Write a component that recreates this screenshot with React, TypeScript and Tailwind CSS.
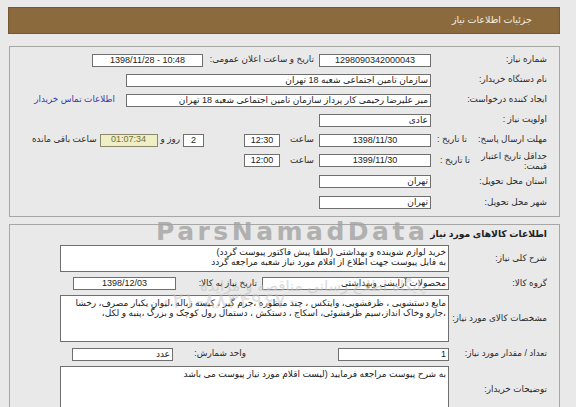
import React from "react";

const box = "bg-white border border-[#6f6f6f] h-[13px] flex items-center text-[9px] leading-none text-[#222] overflow-hidden whitespace-nowrap";
const lbl = "text-[8.8px] text-[#2b2b2b] whitespace-nowrap";

function Row({ label, children, h = "h-[20px]" }: { label: React.ReactNode; children?: React.ReactNode; h?: string }) {
  return (
    <div className={`flex items-center ${h}`}>
      <div className={`w-[128px] shrink-0 pr-[12px] ${lbl}`}>{label}</div>
      {children}
    </div>
  );
}

function Row2({ label, children, h }: { label: React.ReactNode; children?: React.ReactNode; h: string }) {
  return (
    <div className={`flex items-center ${h}`}>
      <div className={`w-[110px] shrink-0 pr-[12px] ${lbl}`}>{label}</div>
      {children}
    </div>
  );
}

export default function App() {
  return (
    <div
      dir="rtl"
      className="relative w-[576px] h-[407px] overflow-hidden bg-[#e9e9e9]"
      style={{ fontFamily: '"Liberation Sans", "DejaVu Sans", sans-serif' }}
    >
      {/* header */}
      <div className="mt-[7px] mr-[16px] w-[552px] h-[27px] bg-[#8b6b3d] border border-[#74582f] flex items-center pr-[27px] text-[9.5px] text-[#f4efe6]">
        جزئیات اطلاعات نیاز
      </div>

      {/* panel 1 */}
      <div className="mt-[12px] mr-[16px] w-[551px] border border-[#a6a6a6] pt-[3px] pb-[3px]">
        <Row label="شماره نیاز:">
          <div className={`${box} w-[112px] justify-center`}>1298090342000043</div>
          <div className={`w-[116px] pr-[5px] ${lbl}`}>تاریخ و ساعت اعلان عمومی:</div>
          <div className={`${box} w-[111px] justify-center`} dir="ltr">1398/11/28 - 10:48</div>
        </Row>
        <Row label="نام دستگاه خریدار:">
          <div className={`${box} w-[305px] pr-[2px]`}>سازمان تامین اجتماعی شعبه 18 تهران</div>
        </Row>
        <Row label="ایجاد کننده درخواست:">
          <div className={`${box} w-[305px] pr-[2px]`}>میر علیرضا رحیمی کار پرداز سازمان تامین اجتماعی شعبه 18 تهران</div>
          <div className="mr-[11px] text-[8.8px] text-[#3838a8] whitespace-nowrap">اطلاعات تماس خریدار</div>
        </Row>
        <Row label="اولویت نیاز :">
          <div className={`${box} w-[112px] pr-[2px]`}>عادی</div>
        </Row>
        <Row
          label={
            <div className="flex justify-between pl-[6px]">
              <span>مهلت ارسال پاسخ:</span>
              <span>تا تاریخ :</span>
            </div>
          }
        >
          <div className={`${box} w-[112px] justify-center`}>1398/11/30</div>
          <div className={`w-[39px] pr-[5px] ${lbl}`}>ساعت</div>
          <div className={`${box} w-[36px] justify-center`}>12:30</div>
          <div className={`${box} w-[21px] justify-center mr-[40px]`}>2</div>
          <div className={`mr-[3px] ${lbl}`}>روز و</div>
          <div className="mr-[3px] h-[13px] w-[58px] border border-[#8a8a6a] bg-[#efeec4] flex items-center justify-center text-[9px] text-[#6f6f45]">01:07:34</div>
          <div className={`mr-[3px] ${lbl}`}>ساعت باقی مانده</div>
        </Row>
        <Row
          h="h-[21px]"
          label={
            <div className="flex justify-between items-center pl-[9px]">
              <span className="leading-[10px]">
                حداقل تاریخ اعتبار
                <br />
                قیمت:
              </span>
              <span>تا تاریخ :</span>
            </div>
          }
        >
          <div className={`${box} w-[112px] justify-center`}>1399/11/30</div>
          <div className={`w-[39px] pr-[5px] ${lbl}`}>ساعت</div>
          <div className={`${box} w-[36px] justify-center`}>12:00</div>
        </Row>
        <Row h="h-[21px]" label="استان محل تحویل:">
          <div className={`${box} w-[112px] pr-[2px]`}>تهران</div>
        </Row>
        <Row h="h-[21px]" label="شهر محل تحویل:">
          <div className={`${box} w-[112px] pr-[2px]`}>تهران</div>
        </Row>
      </div>

      {/* panel 2 */}
      <div className="mt-[7px] mr-[16px] w-[551px] h-[200px] border border-[#a6a6a6]">
        <div className="h-[20px] flex items-center pr-[12px] text-[9.2px] font-bold text-[#222]">
          اطلاعات کالاهای مورد نیاز
        </div>
        <Row2 h="h-[27px]" label="شرح کلی نیاز:">
          <div className="w-[389px] h-[27px] bg-white border border-[#6f6f6f] pr-[2px] pt-[1px] text-[9px] leading-[10px] text-[#222] whitespace-nowrap overflow-hidden">
            <div>خرید لوازم شوینده و بهداشتی (لطفا پیش فاکتور پیوست گردد)</div>
            <div>به فایل پیوست جهت اطلاع از اقلام مورد نیاز شعبه مراجعه گردد</div>
          </div>
        </Row2>
        <Row2 h="h-[23px]" label="گروه کالا:">
          <div className={`${box} w-[187px] pr-[2px]`}>محصولات آرایشی وبهداشتی</div>
          <div className={`w-[86px] pr-[5px] ${lbl}`}>تاریخ نیاز به کالا:</div>
          <div className={`${box} w-[103px] justify-center`}>1398/12/03</div>
        </Row2>
        <Row2 h="h-[47px]" label="مشخصات کالای مورد نیاز:">
          <div className="w-[389px] h-[47px] bg-white border border-[#6f6f6f] pr-[2px] pt-[2px] text-[9px] leading-[10px] text-[#222] whitespace-nowrap overflow-hidden">
            <div>مایع دستشویی ، ظرفشویی، وایتکس ، چند منظوره ،جرم گیر ، کیسه زباله ،لیوان یکبار مصرف، رخشا</div>
            <div>،جارو وخاک انداز،سیم ظرفشوئی، اسکاج ، دستکش ، دستمال رول کوچک و بزرگ ،پنبه و لکل،</div>
          </div>
        </Row2>
        <Row2 h="h-[24px]" label="تعداد / مقدار مورد نیاز:">
          <div className={`${box} w-[111px] pr-[2px]`}>1</div>
          <div className={`w-[165px] pr-[92px] ${lbl}`}>واحد شمارش:</div>
          <div className={`${box} w-[101px] pr-[2px]`}>عدد</div>
        </Row2>
        <Row2 h="h-[48px]" label="توضیحات خریدار:">
          <div className="w-[389px] h-[48px] bg-white border border-[#6f6f6f] pr-[2px] pt-[2px] text-[9px] leading-[10px] text-[#222] whitespace-nowrap overflow-hidden">
            به شرح پیوست مراجعه فرمایید (لیست اقلام مورد نیاز پیوست می باشد
          </div>
        </Row2>
      </div>

      {/* watermark */}
      <div
        dir="ltr"
        className="pointer-events-none absolute left-[156px] top-[219px] text-[25px] font-bold leading-none tracking-[3.5px] text-[#a3a3a3] opacity-80"
        style={{ fontFamily: '"DejaVu Sans", sans-serif' }}
      >
        ParsNamadData
      </div>
      <div
        className="pointer-events-none absolute left-[200px] top-[279px] text-[15px] leading-none text-[#c2c2c2] opacity-60 whitespace-nowrap"
        style={{ fontFamily: '"DejaVu Sans", sans-serif' }}
      >
        پایگاه اطلاع رسانی مناقصه و مزایده
      </div>
      <div
        dir="ltr"
        className="pointer-events-none absolute left-[160px] top-[290px] text-[22px] leading-none tracking-[4px] text-[#c4c4c4] opacity-50 whitespace-nowrap"
        style={{ fontFamily: '"DejaVu Sans", sans-serif' }}
      >
        ۰۲۱-۸۸۳۴۹۶۷۰
      </div>
    </div>
  );
}
